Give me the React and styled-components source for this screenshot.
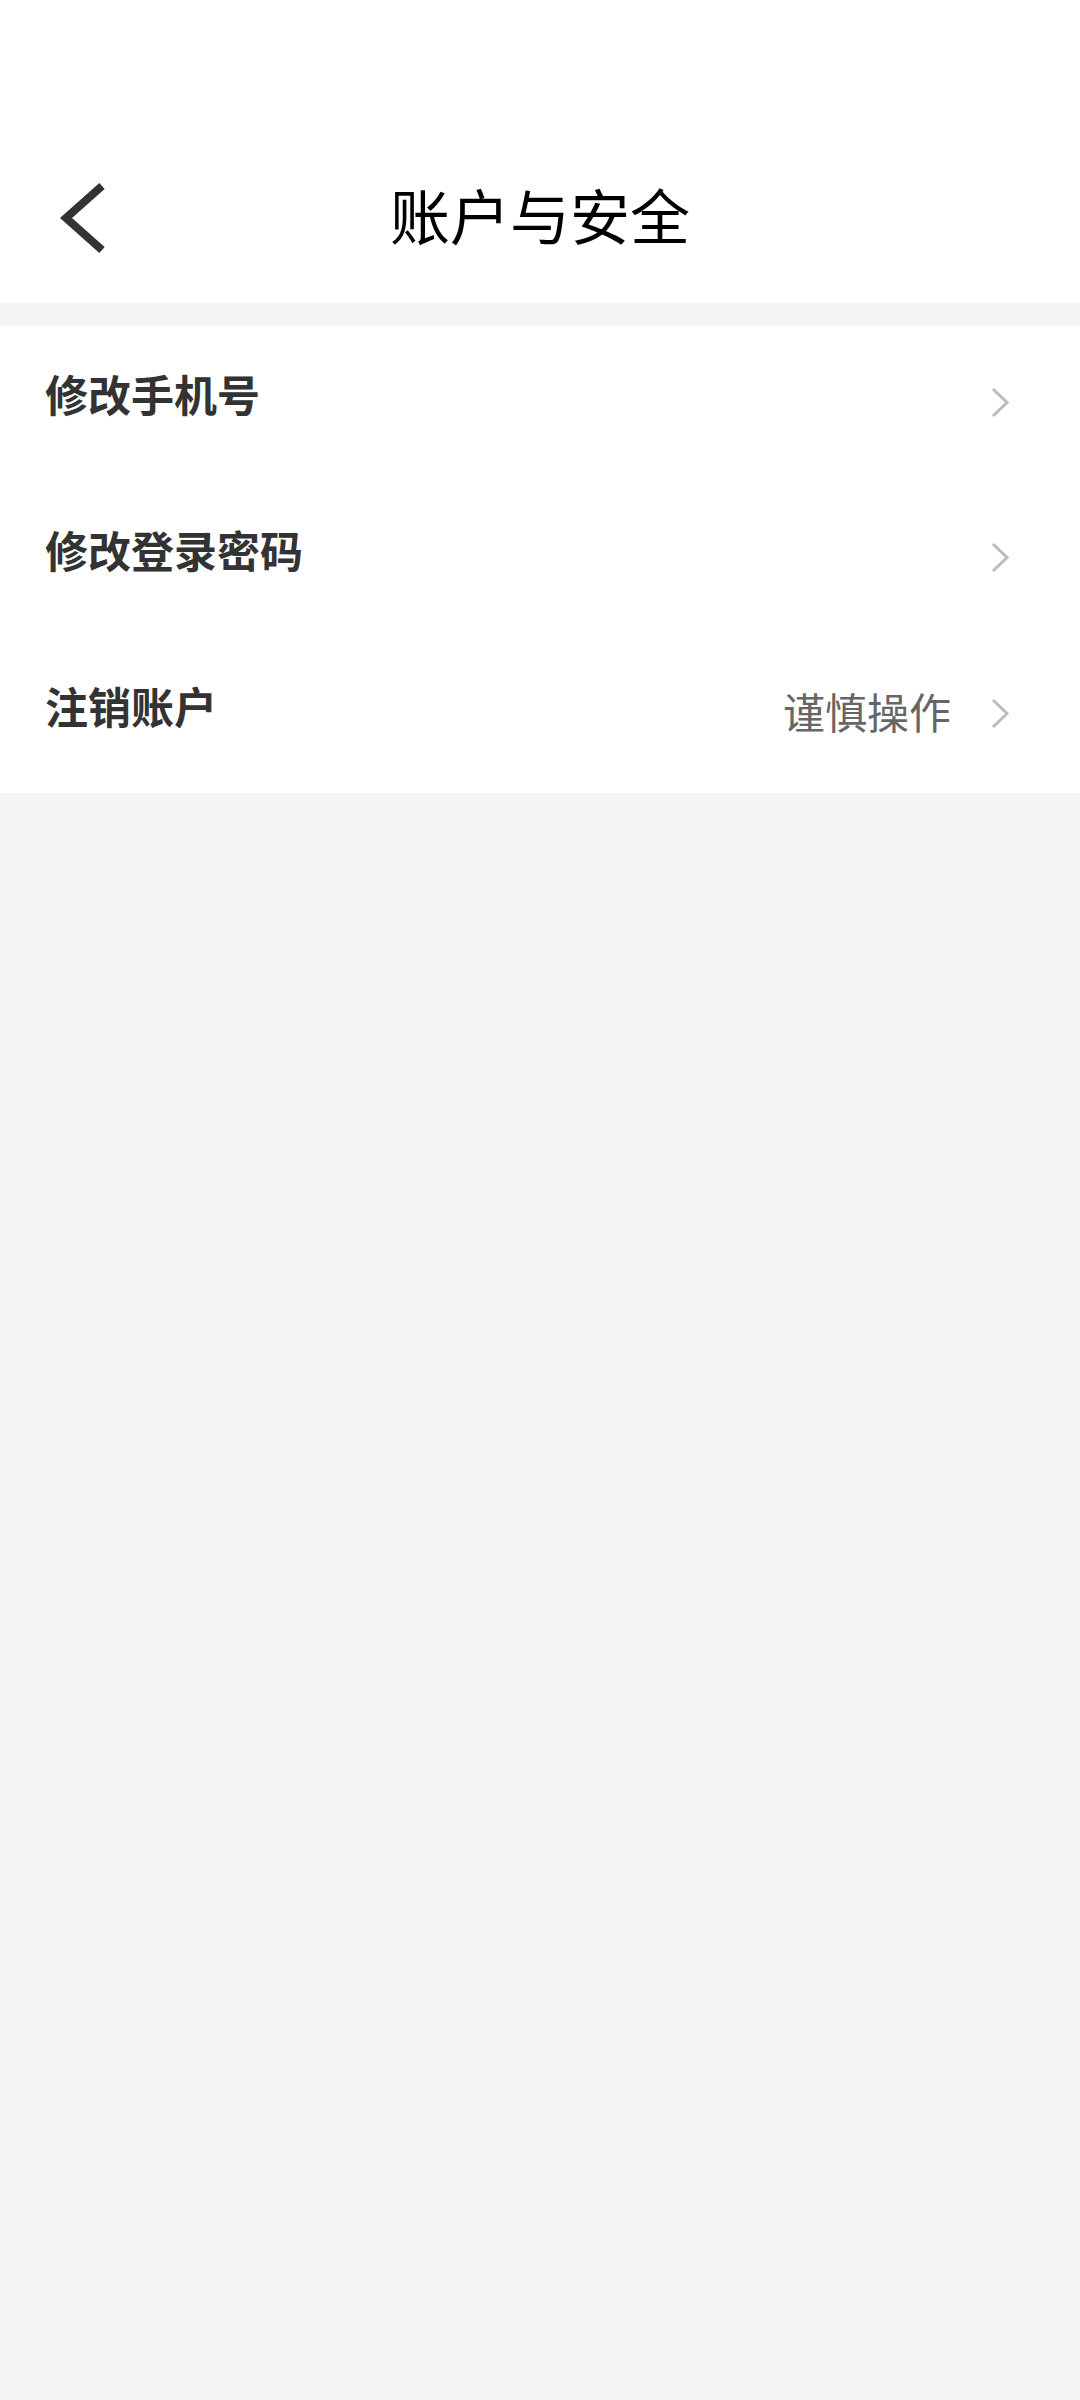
import React from 'react';
import styled, { createGlobalStyle } from 'styled-components';

const GlobalStyle = createGlobalStyle`
  html, body {
    margin: 0;
    padding: 0;
    background: #f4f4f4;
    font-family: "Noto Sans CJK SC", "Noto Sans", sans-serif;
  }
`;

const Page = styled.div`
  min-height: 2400px;
  background: #f4f4f4;
  display: flex;
  flex-direction: column;
`;

const Header = styled.header`
  background: #fff;
  padding-top: 133px;
`;

const NavBar = styled.div`
  height: 170px;
  display: grid;
  grid-template-columns: 160px 1fr 160px;
  align-items: center;
`;

const BackButton = styled.button`
  border: 0;
  background: none;
  padding: 0 0 0 58px;
  height: 100%;
  display: flex;
  align-items: center;
  cursor: pointer;
`;

const Title = styled.h1`
  margin: 0 0 8px;
  text-align: center;
  font-size: 60px;
  font-weight: 400;
  color: #000;
  line-height: 1;
`;

const List = styled.ul`
  list-style: none;
  margin: 23px 0 0;
  padding: 0;
  background: #fff;
`;

const Row = styled.li`
  height: 155.67px;
  display: flex;
  align-items: center;
  padding: 0 70px 0 45px;
  box-sizing: border-box;
`;

const Label = styled.span`
  flex: 1;
  font-size: 43px;
  font-weight: 700;
  color: #333;
  line-height: 1;
  margin-bottom: 20px;
`;

const Hint = styled.span`
  font-size: 42px;
  color: #666;
  line-height: 1;
  margin: 0 40px 8px 0;
`;

const Chevron = styled.svg`
  width: 19px;
  height: 31px;
  margin-bottom: 3px;
`;

const BackIcon = () => (
  <svg width="48" height="72" viewBox="0 0 48 72">
    <polyline
      points="44,4 8,36 44,68"
      fill="none"
      stroke="#333"
      strokeWidth="8"
      strokeLinejoin="miter"
    />
  </svg>
);

const ChevronIcon = () => (
  <Chevron viewBox="0 0 19 31">
    <polyline points="2,2 16,15.5 2,29" fill="none" stroke="#bbb" strokeWidth="3" />
  </Chevron>
);

const items = [
  { label: '修改手机号' },
  { label: '修改登录密码' },
  { label: '注销账户', hint: '谨慎操作' },
];

export default function App() {
  return (
    <Page>
      <GlobalStyle />
      <Header>
        <NavBar>
          <BackButton aria-label="返回">
            <BackIcon />
          </BackButton>
          <Title>账户与安全</Title>
          <span />
        </NavBar>
      </Header>
      <List>
        {items.map(item => (
          <Row key={item.label}>
            <Label>{item.label}</Label>
            {item.hint && <Hint>{item.hint}</Hint>}
            <ChevronIcon />
          </Row>
        ))}
      </List>
    </Page>
  );
}
